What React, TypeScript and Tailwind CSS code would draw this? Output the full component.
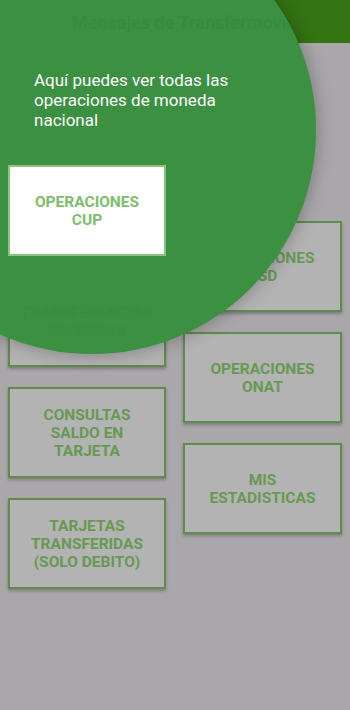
const left = [
  { label: 'OPERACIONES CUP', spot: true },
  { label: 'TRANSFERENCIAS RECIBIDAS', spot: false },
  { label: 'CONSULTAS SALDO EN TARJETA', spot: false },
  { label: 'TARJETAS TRANSFERIDAS (SOLO DEBITO)', spot: false },
]

const right = ['OPERACIONES USD', 'OPERACIONES ONAT', 'MIS ESTADISTICAS']

function MenuButton({ label, spot }: { label: string; spot?: boolean }): React.JSX.Element {
  return (
    <button
      className={`flex h-[91px] w-full items-center justify-center border-2 px-3 text-center text-[15.5px] font-bold leading-[18px] ${
        spot
          ? 'relative z-20 border-[#8cc47e] bg-white text-[#7dbd6d]'
          : 'border-[#5e8c4b] bg-[#b3b3b3] text-[#679953] shadow-[0_2px_3px_rgba(0,0,0,0.25)]'
      }`}
    >
      {label}
    </button>
  )
}

export default function App(): React.JSX.Element {
  return (
    <div
      className="relative h-[710px] w-full overflow-hidden bg-[#a9a7a9]"
      style={{ fontFamily: 'Roboto, "Noto Sans", sans-serif' }}
    >
      <header className="h-[43px] bg-[#337512]" />

      <main className="flex gap-[17px] px-[8px]">
        <div className="mt-[122px] flex w-[158px] flex-col gap-[20px]">
          {left.map((b) => (
            <MenuButton key={b.label} label={b.label} spot={b.spot} />
          ))}
        </div>
        <div className="mt-[178px] flex w-[159px] flex-col gap-[20px]">
          {right.map((l) => (
            <MenuButton key={l} label={l} />
          ))}
        </div>
      </main>

      {/* tutorial spotlight; faint copies of what lies under it show through */}
      <div className="absolute left-[-132px] top-[-94px] z-10 h-[448px] w-[448px] overflow-hidden rounded-full bg-[#3b9141] shadow-[0_0_18px_rgba(0,0,0,0.3)]">
        <div className="absolute left-[204px] top-[103px] whitespace-nowrap text-[18px] font-bold text-[#388b3e]">
          Mensajes de Transfermovil
        </div>
        <div className="absolute left-[140px] top-[370px] flex h-[91px] w-[158px] items-center justify-center px-3 text-center text-[15.5px] font-bold leading-[18px] text-[#398e3f]">
          TRANSFERENCIAS RECIBIDAS
        </div>
        <p className="absolute left-[166px] top-[164px] w-[220px] text-[17px] leading-[20px] text-white">
          Aquí puedes ver todas las operaciones de moneda nacional
        </p>
      </div>
    </div>
  )
}
